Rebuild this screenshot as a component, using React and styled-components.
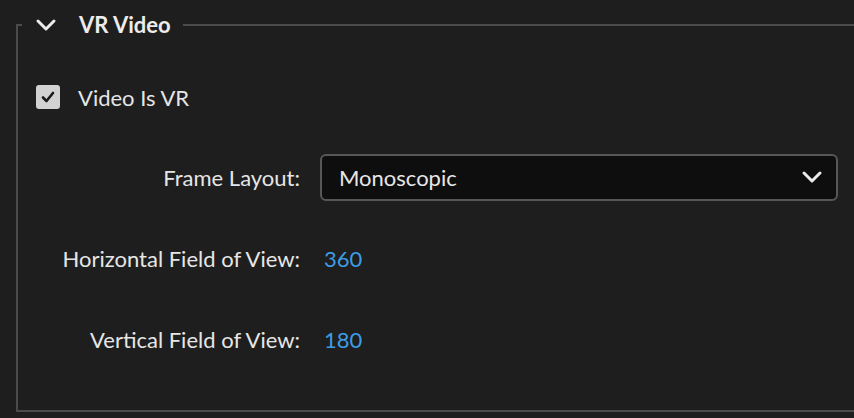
import styled, { createGlobalStyle } from "styled-components";

const Global = createGlobalStyle`
  html, body {
    margin: 0;
    background: #1e1e1e;
    width: 854px;
    height: 418px;
    overflow: hidden;
  }
  body {
    font-family: Lato, "Open Sans", "Liberation Sans", sans-serif;
    color: #e6e6e6;
  }
`;

const Page = styled.div`
  padding: 12px 0 0 16px;
`;

const Group = styled.fieldset`
  margin: 0;
  padding: 0;
  width: 860px;
  height: 400px;
  box-sizing: border-box;
  border: 2px solid #4b4b4b;
  border-right: none;
  min-width: 0;
`;

const Legend = styled.legend`
  margin-left: 4px;
  padding: 0 12px 0 13px;
  display: flex;
  align-items: center;
  gap: 22px;
  font-size: 22px;
  font-weight: 700;
  line-height: 26px;
  color: #ececec;
`;

const Body = styled.div`
  display: flex;
  flex-direction: column;
  padding-top: 46px;
`;

const CheckRow = styled.label`
  display: flex;
  align-items: center;
  gap: 18px;
  padding-left: 18px;
  height: 26px;
  font-size: 22px;
  margin-bottom: 43px;
`;

const Box = styled.span`
  width: 24px;
  height: 24px;
  border-radius: 3px;
  background: #d2d2d2;
  display: flex;
  align-items: center;
  justify-content: center;
`;

const Form = styled.div`
  display: grid;
  grid-template-columns: 282px 1fr;
  grid-auto-rows: 48px;
  align-items: center;
  column-gap: 20px;
  row-gap: 33px;
  padding-right: 38px;
`;

const Label = styled.span`
  text-align: right;
  font-size: 22px;
`;

const Select = styled.div`
  height: 47px;
  box-sizing: border-box;
  border: 2px solid #575757;
  border-radius: 6px;
  background: #0e0e0e;
  display: flex;
  align-items: center;
  justify-content: space-between;
  padding: 0 13px 0 17px;
  font-size: 22px;
`;

const Value = styled.span`
  padding-left: 4px;
  color: #3d9ce3;
  font-size: 22px;
`;

const Chevron = () => (
  <svg width="22" height="22" viewBox="0 0 22 22">
    <path d="M3 7l8 8 8-8" fill="none" stroke="#ececec" strokeWidth="3" strokeLinecap="round" strokeLinejoin="round" />
  </svg>
);

export default function App() {
  return (
    <Page>
      <Global />
      <Group>
        <Legend>
          <Chevron />
          VR Video
        </Legend>
        <Body>
          <CheckRow>
            <Box>
              <svg width="16" height="16" viewBox="0 0 16 16">
                <path d="M3 8.5l3.5 3.5L13 4" fill="none" stroke="#1a1a1a" strokeWidth="2.6" strokeLinecap="round" strokeLinejoin="round" />
              </svg>
            </Box>
            Video Is VR
          </CheckRow>
          <Form>
            <Label>Frame Layout:</Label>
            <Select>
              Monoscopic
              <Chevron />
            </Select>
            <Label>Horizontal Field of View:</Label>
            <Value>360</Value>
            <Label>Vertical Field of View:</Label>
            <Value>180</Value>
          </Form>
        </Body>
      </Group>
    </Page>
  );
}
